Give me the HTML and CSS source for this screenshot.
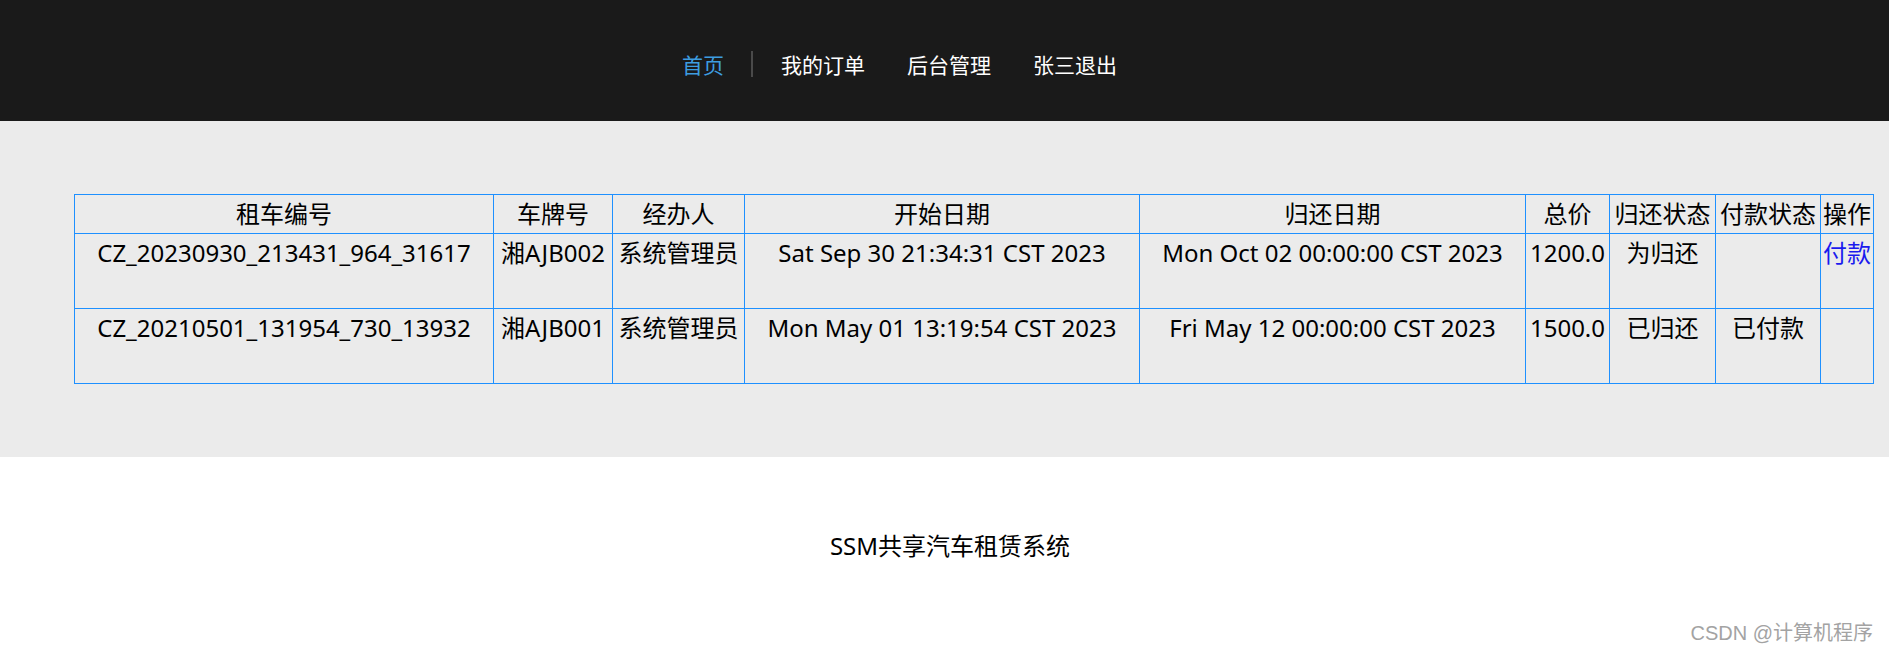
FILE: index.html
```html
<!DOCTYPE html>
<html lang="zh-CN">
<head>
<meta charset="utf-8">
<title>SSM共享汽车租赁系统</title>
<link rel="stylesheet" href="styles.css">
</head>
<body>
<header class="topbar">
  <nav class="nav">
    <a class="nav-item active" href="#">首页</a>
    <span class="nav-sep"></span>
    <a class="nav-item" href="#">我的订单</a>
    <a class="nav-item" href="#">后台管理</a>
    <a class="nav-item" href="#">张三退出</a>
  </nav>
</header>

<main class="content">
  <table class="orders">
    <colgroup>
      <col class="c-id">
      <col class="c-plate">
      <col class="c-agent">
      <col class="c-start">
      <col class="c-end">
      <col class="c-price">
      <col class="c-return">
      <col class="c-pay">
      <col class="c-op">
    </colgroup>
    <thead>
      <tr>
        <th>租车编号</th>
        <th>车牌号</th>
        <th>经办人</th>
        <th>开始日期</th>
        <th>归还日期</th>
        <th>总价</th>
        <th>归还状态</th>
        <th>付款状态</th>
        <th>操作</th>
      </tr>
    </thead>
    <tbody>
      <tr>
        <td>CZ_20230930_213431_964_31617</td>
        <td>湘AJB002</td>
        <td>系统管理员</td>
        <td>Sat Sep 30 21:34:31 CST 2023</td>
        <td>Mon Oct 02 00:00:00 CST 2023</td>
        <td>1200.0</td>
        <td>为归还</td>
        <td></td>
        <td><a class="op-link" href="#">付款</a></td>
      </tr>
      <tr>
        <td>CZ_20210501_131954_730_13932</td>
        <td>湘AJB001</td>
        <td>系统管理员</td>
        <td>Mon May 01 13:19:54 CST 2023</td>
        <td>Fri May 12 00:00:00 CST 2023</td>
        <td>1500.0</td>
        <td>已归还</td>
        <td>已付款</td>
        <td></td>
      </tr>
    </tbody>
  </table>
</main>

<footer class="footer">
  <p class="footer-title">SSM共享汽车租赁系统</p>
</footer>

<div class="watermark">CSDN @计算机程序</div>
</body>
</html>
```

FILE: styles.css
```css
html, body {
  margin: 0;
  padding: 0;
  background: #ffffff;
}

body {
  position: relative;
  min-height: 652px;
  font-family: "Noto Sans", "Noto Sans CJK SC", sans-serif;
  color: #000000;
}

/* ---------- top bar ---------- */
.topbar {
  background: #1a1a1a;
  height: 121px;
  box-sizing: border-box;
  padding-top: 7px;
}

.nav {
  height: 100%;
  display: flex;
  justify-content: center;
  align-items: center;
  padding-right: 90px;
}

.nav-item {
  font-family: "Noto Sans CJK SC", sans-serif;
  font-size: 21px;
  line-height: 28px;
  color: #ffffff;
  text-decoration: none;
  padding: 0 21px;
}

.nav-item.active {
  color: #3d9de0;
}

.nav-sep {
  width: 2px;
  height: 26px;
  background: #4a4a4a;
  margin: 0 7px 0 6px;
}

/* ---------- content ---------- */
.content {
  background: #ebebeb;
  padding: 73px 0;
}

.orders {
  margin-left: 74px;
  width: 1800px;
  table-layout: fixed;
  border-collapse: collapse;
  font-size: 24px;
}

.orders th,
.orders td {
  border: 1px solid #1e90ff;
  text-align: center;
  white-space: nowrap;
  overflow: hidden;
  font-weight: normal;
  padding: 0;
}

.orders th {
  line-height: 38px;
}

.orders td {
  line-height: 37px;
  padding-bottom: 37px;
  vertical-align: top;
}

.c-id { width: 419px; }
.c-plate { width: 119px; }
.c-agent { width: 132px; }
.c-start { width: 395px; }
.c-end { width: 386px; }
.c-price { width: 84px; }
.c-return { width: 106px; }
.c-pay { width: 105px; }
.c-op { width: 53px; }

.op-link {
  color: #1a1aee;
  text-decoration: none;
}

/* ---------- footer ---------- */
.footer {
  padding: 73px 0 0 11px;
  text-align: center;
}

.footer-title {
  margin: 0;
  font-size: 24px;
  line-height: 32px;
}

/* ---------- watermark ---------- */
.watermark {
  position: absolute;
  right: 16px;
  top: 619px;
  font-family: "Liberation Sans", "Noto Sans CJK SC", sans-serif;
  font-size: 20px;
  line-height: 28px;
  color: #a3a3a3;
}
```
